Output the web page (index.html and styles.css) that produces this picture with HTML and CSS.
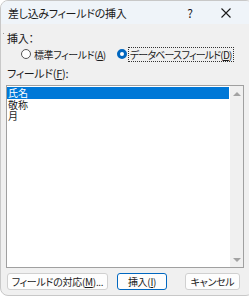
FILE: index.html
```html
<!DOCTYPE html>
<html lang="ja">
<head>
  <meta charset="UTF-8">
  <title>差し込みフィールドの挿入</title>
  <link rel="stylesheet" href="styles.css">
</head>
<body>
  <div class="window">
    <div class="titlebar">
      <span class="title">差し込みフィールドの挿入</span>
      <span class="help">?</span>
      <span class="close">
        <svg width="10" height="10" viewBox="0 0 10 10"><path d="M0.5 0.5 L9.5 9.5 M9.5 0.5 L0.5 9.5" stroke="#1a1a1a" stroke-width="1.1"/></svg>
      </span>
    </div>
    <div class="content">
      <span class="dot"></span>
      <div class="label">挿入：</div>
      <div class="radios">
        <label class="radio"><span class="circle"></span><span>標準フィールド(<u>A</u>)</span></label>
        <label class="radio checked"><span class="circle"></span><span class="focus">データベース フィールド(<u>D</u>)</span></label>
      </div>
      <div class="label field-label">フィールド(<u>F</u>):</div>
      <div class="listbox">
        <ul class="items">
          <li class="selected">氏名</li>
          <li>敬称</li>
          <li>月</li>
        </ul>
        <div class="scrollbar">
          <span class="arrow up"></span>
          <span class="arrow down"></span>
        </div>
      </div>
      <div class="buttons">
        <button class="btn btn-map">フィールドの対応(<u>M</u>)...</button>
        <button class="btn btn-insert">挿入(<u>I</u>)</button>
        <button class="btn btn-cancel">キャンセル</button>
      </div>
    </div>
  </div>
</body>
</html>
```

FILE: styles.css
```css
html, body { margin: 0; padding: 0; background: #fff; overflow: hidden; }
body { font-family: "Noto Sans CJK JP", "Noto Sans", sans-serif; font-size: 11px; color: #1a1a1a; font-feature-settings: "palt"; }
u { text-decoration-thickness: 1px; text-underline-offset: 1px; }
.window { width: 252px; height: 294px; border: 1px solid #c8c8c8; border-radius: 8px; overflow: hidden; background: #f0f0f0; }
.titlebar { height: 23px; background: #eff4f9; display: flex; align-items: center; }
.title { padding-left: 7px; flex: 1; font-size: 11px; letter-spacing: -0.3px; }
.help { width: 12px; text-align: center; margin-right: 25px; font-size: 12px; }
.close { width: 10px; height: 10px; margin-right: 22px; display: flex; }
.content { padding: 0 0 0 5px; position: relative; }
.dot { position: absolute; left: 2px; top: 2px; width: 1px; height: 1px; background: #999; }
.label { height: 14px; line-height: 14px; margin-top: 7px; padding-left: 1px; white-space: nowrap; letter-spacing: -0.3px; }
.field-label { margin-top: 5px; }
.radios { display: flex; height: 14px; margin-top: 2px; align-items: center; white-space: nowrap; }
.radio { display: flex; align-items: center; line-height: 13px; letter-spacing: -0.4px; font-size: 10px; }
.radio:first-child { margin-left: 15px; margin-right: 11px; }
.radio.checked { letter-spacing: -0.85px; word-spacing: -1px; }
.circle { flex: none; box-sizing: border-box; width: 10px; height: 10px; border: 1px solid #555; border-radius: 50%; background: #fff; margin-right: 3px; }
.checked .circle { border: 3px solid #0067c0; margin-right: 2px; }
.focus { outline: 1px dotted #333; outline-offset: 0; padding: 0 2px 0 1px; }
.listbox { width: 236px; height: 181px; margin-top: 5px; border: 1px solid #a0a0a0; background: #fff; display: flex; }
.items { list-style: none; margin: 0; padding: 0; flex: 1; }
.items li { height: 11px; line-height: 11px; padding-left: 1px; font-size: 10px; }
.items li.selected { background: #0078d7; color: #fff; margin-top: 1px; height: 12px; line-height: 12px; margin-right: 1px; }
.scrollbar { width: 13px; background: #f0f0f0; display: flex; flex-direction: column; justify-content: space-between; align-items: center; padding: 6px 0 5px; }
.arrow { width: 0; height: 0; border-left: 4px solid transparent; border-right: 4px solid transparent; }
.arrow.up { border-bottom: 4px solid #a3a3a3; }
.arrow.down { border-top: 4px solid #a3a3a3; }
.buttons { display: flex; margin-top: 5px; padding-left: 1px; }
.btn { height: 17px; padding: 0; font-family: inherit; font-size: 10px; font-feature-settings: "palt"; letter-spacing: -0.3px; white-space: nowrap; color: #1a1a1a; background: #fdfdfd; border: 1px solid #d0d0d0; border-radius: 3px; }
.btn-map { width: 101px; }
.btn-insert { width: 50px; margin-left: 9px; border-color: #0067c0; }
.btn-cancel { width: 55px; margin-left: 18px; }
```
